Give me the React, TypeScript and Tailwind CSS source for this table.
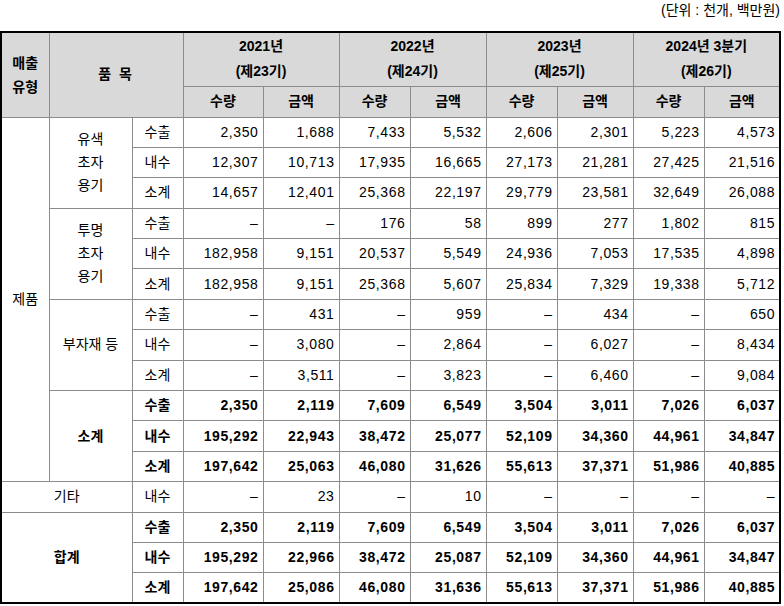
const font = "font-['Liberation_Sans','Noto_Sans_CJK_KR',sans-serif]"

type Row = { kind: string; vals: string[] }
type Group = { label: string[]; bold?: boolean; rows: Row[] }

const D = '–'

const groups: Group[] = [
  {
    label: ['유색', '초자', '용기'],
    rows: [
      { kind: '수출', vals: ['2,350', '1,688', '7,433', '5,532', '2,606', '2,301', '5,223', '4,573'] },
      { kind: '내수', vals: ['12,307', '10,713', '17,935', '16,665', '27,173', '21,281', '27,425', '21,516'] },
      { kind: '소계', vals: ['14,657', '12,401', '25,368', '22,197', '29,779', '23,581', '32,649', '26,088'] },
    ],
  },
  {
    label: ['투명', '초자', '용기'],
    rows: [
      { kind: '수출', vals: [D, D, '176', '58', '899', '277', '1,802', '815'] },
      { kind: '내수', vals: ['182,958', '9,151', '20,537', '5,549', '24,936', '7,053', '17,535', '4,898'] },
      { kind: '소계', vals: ['182,958', '9,151', '25,368', '5,607', '25,834', '7,329', '19,338', '5,712'] },
    ],
  },
  {
    label: ['부자재 등'],
    rows: [
      { kind: '수출', vals: [D, '431', D, '959', D, '434', D, '650'] },
      { kind: '내수', vals: [D, '3,080', D, '2,864', D, '6,027', D, '8,434'] },
      { kind: '소계', vals: [D, '3,511', D, '3,823', D, '6,460', D, '9,084'] },
    ],
  },
  {
    label: ['소계'],
    bold: true,
    rows: [
      { kind: '수출', vals: ['2,350', '2,119', '7,609', '6,549', '3,504', '3,011', '7,026', '6,037'] },
      { kind: '내수', vals: ['195,292', '22,943', '38,472', '25,077', '52,109', '34,360', '44,961', '34,847'] },
      { kind: '소계', vals: ['197,642', '25,063', '46,080', '31,626', '55,613', '37,371', '51,986', '40,885'] },
    ],
  },
]

const etc: Row = { kind: '내수', vals: [D, '23', D, '10', D, D, D, D] }

const total: Row[] = [
  { kind: '수출', vals: ['2,350', '2,119', '7,609', '6,549', '3,504', '3,011', '7,026', '6,037'] },
  { kind: '내수', vals: ['195,292', '22,966', '38,472', '25,087', '52,109', '34,360', '44,961', '34,847'] },
  { kind: '소계', vals: ['197,642', '25,086', '46,080', '31,636', '55,613', '37,371', '51,986', '40,885'] },
]

const years = [
  ['2021년', '(제23기)'],
  ['2022년', '(제24기)'],
  ['2023년', '(제25기)'],
  ['2024년 3분기', '(제26기)'],
]

const colClass = [
  'w-[48px]', 'w-[83px]', 'w-[51px]', 'w-[80px]', 'w-[76px]', 'w-[71px]',
  'w-[76px]', 'w-[71px]', 'w-[76px]', 'w-[71px]', 'w-[76px]',
]

const cell = 'border border-[#8c8c8c] p-0'
const head = `${cell} bg-[#d9d9d9] font-bold text-center`

function Cells({ row, bold }: { row: Row; bold?: boolean }) {
  return (
    <>
      <td className={`${cell} text-center ${bold ? 'font-bold' : ''}`}>{row.kind}</td>
      {row.vals.map((v, i) => (
        <td key={i} className={`${cell} text-right pr-[4px] tracking-[0.6px] ${bold ? 'font-bold' : ''}`}>
          {v}
        </td>
      ))}
    </>
  )
}

export default function App() {
  return (
    <div className={`${font} bg-white text-black text-[14px] w-[784px] h-[606px]`}>
      <div className="h-[31px] pt-[1px] pr-[4px] text-right leading-[18px]">(단위 : 천개, 백만원)</div>
      <table className="table-fixed border-collapse border-2 border-black w-[780px]">
        <colgroup>
          {colClass.map((c, i) => (
            <col key={i} className={c} />
          ))}
        </colgroup>
        <thead>
          <tr className="h-[54px]">
            <th rowSpan={2} className={`${head} leading-[24px]`}>
              매출
              <br />
              유형
            </th>
            <th rowSpan={2} colSpan={2} className={`${head} tracking-[2px]`}>
              품 목
            </th>
            {years.map((y) => (
              <th key={y[0]} colSpan={2} className={`${head} leading-[25px]`}>
                {y[0]}
                <br />
                {y[1]}
              </th>
            ))}
          </tr>
          <tr className="h-[31px]">
            {years.map((y) => (
              <>
                <th key={y[0] + 'a'} className={head}>수량</th>
                <th key={y[0] + 'b'} className={head}>금액</th>
              </>
            ))}
          </tr>
        </thead>
        <tbody>
          {groups.map((g, gi) =>
            g.rows.map((r, ri) => (
              <tr key={`${gi}-${ri}`} className="h-[30.4px]">
                {gi === 0 && ri === 0 && (
                  <td rowSpan={12} className={`${cell} text-center`}>
                    제품
                  </td>
                )}
                {ri === 0 && (
                  <td rowSpan={3} className={`${cell} text-center leading-[23px] ${g.bold ? 'font-bold' : ''}`}>
                    {g.label.map((l, li) => (
                      <div key={li}>{l}</div>
                    ))}
                  </td>
                )}
                <Cells row={r} bold={g.bold} />
              </tr>
            ))
          )}
          <tr className="h-[30.4px]">
            <td colSpan={2} className={`${cell} text-center`}>
              기타
            </td>
            <Cells row={etc} />
          </tr>
          {total.map((r, ri) => (
            <tr key={ri} className="h-[30.4px]">
              {ri === 0 && (
                <td rowSpan={3} colSpan={2} className={`${cell} text-center font-bold`}>
                  합계
                </td>
              )}
              <Cells row={r} bold />
            </tr>
          ))}
        </tbody>
      </table>
    </div>
  )
}
